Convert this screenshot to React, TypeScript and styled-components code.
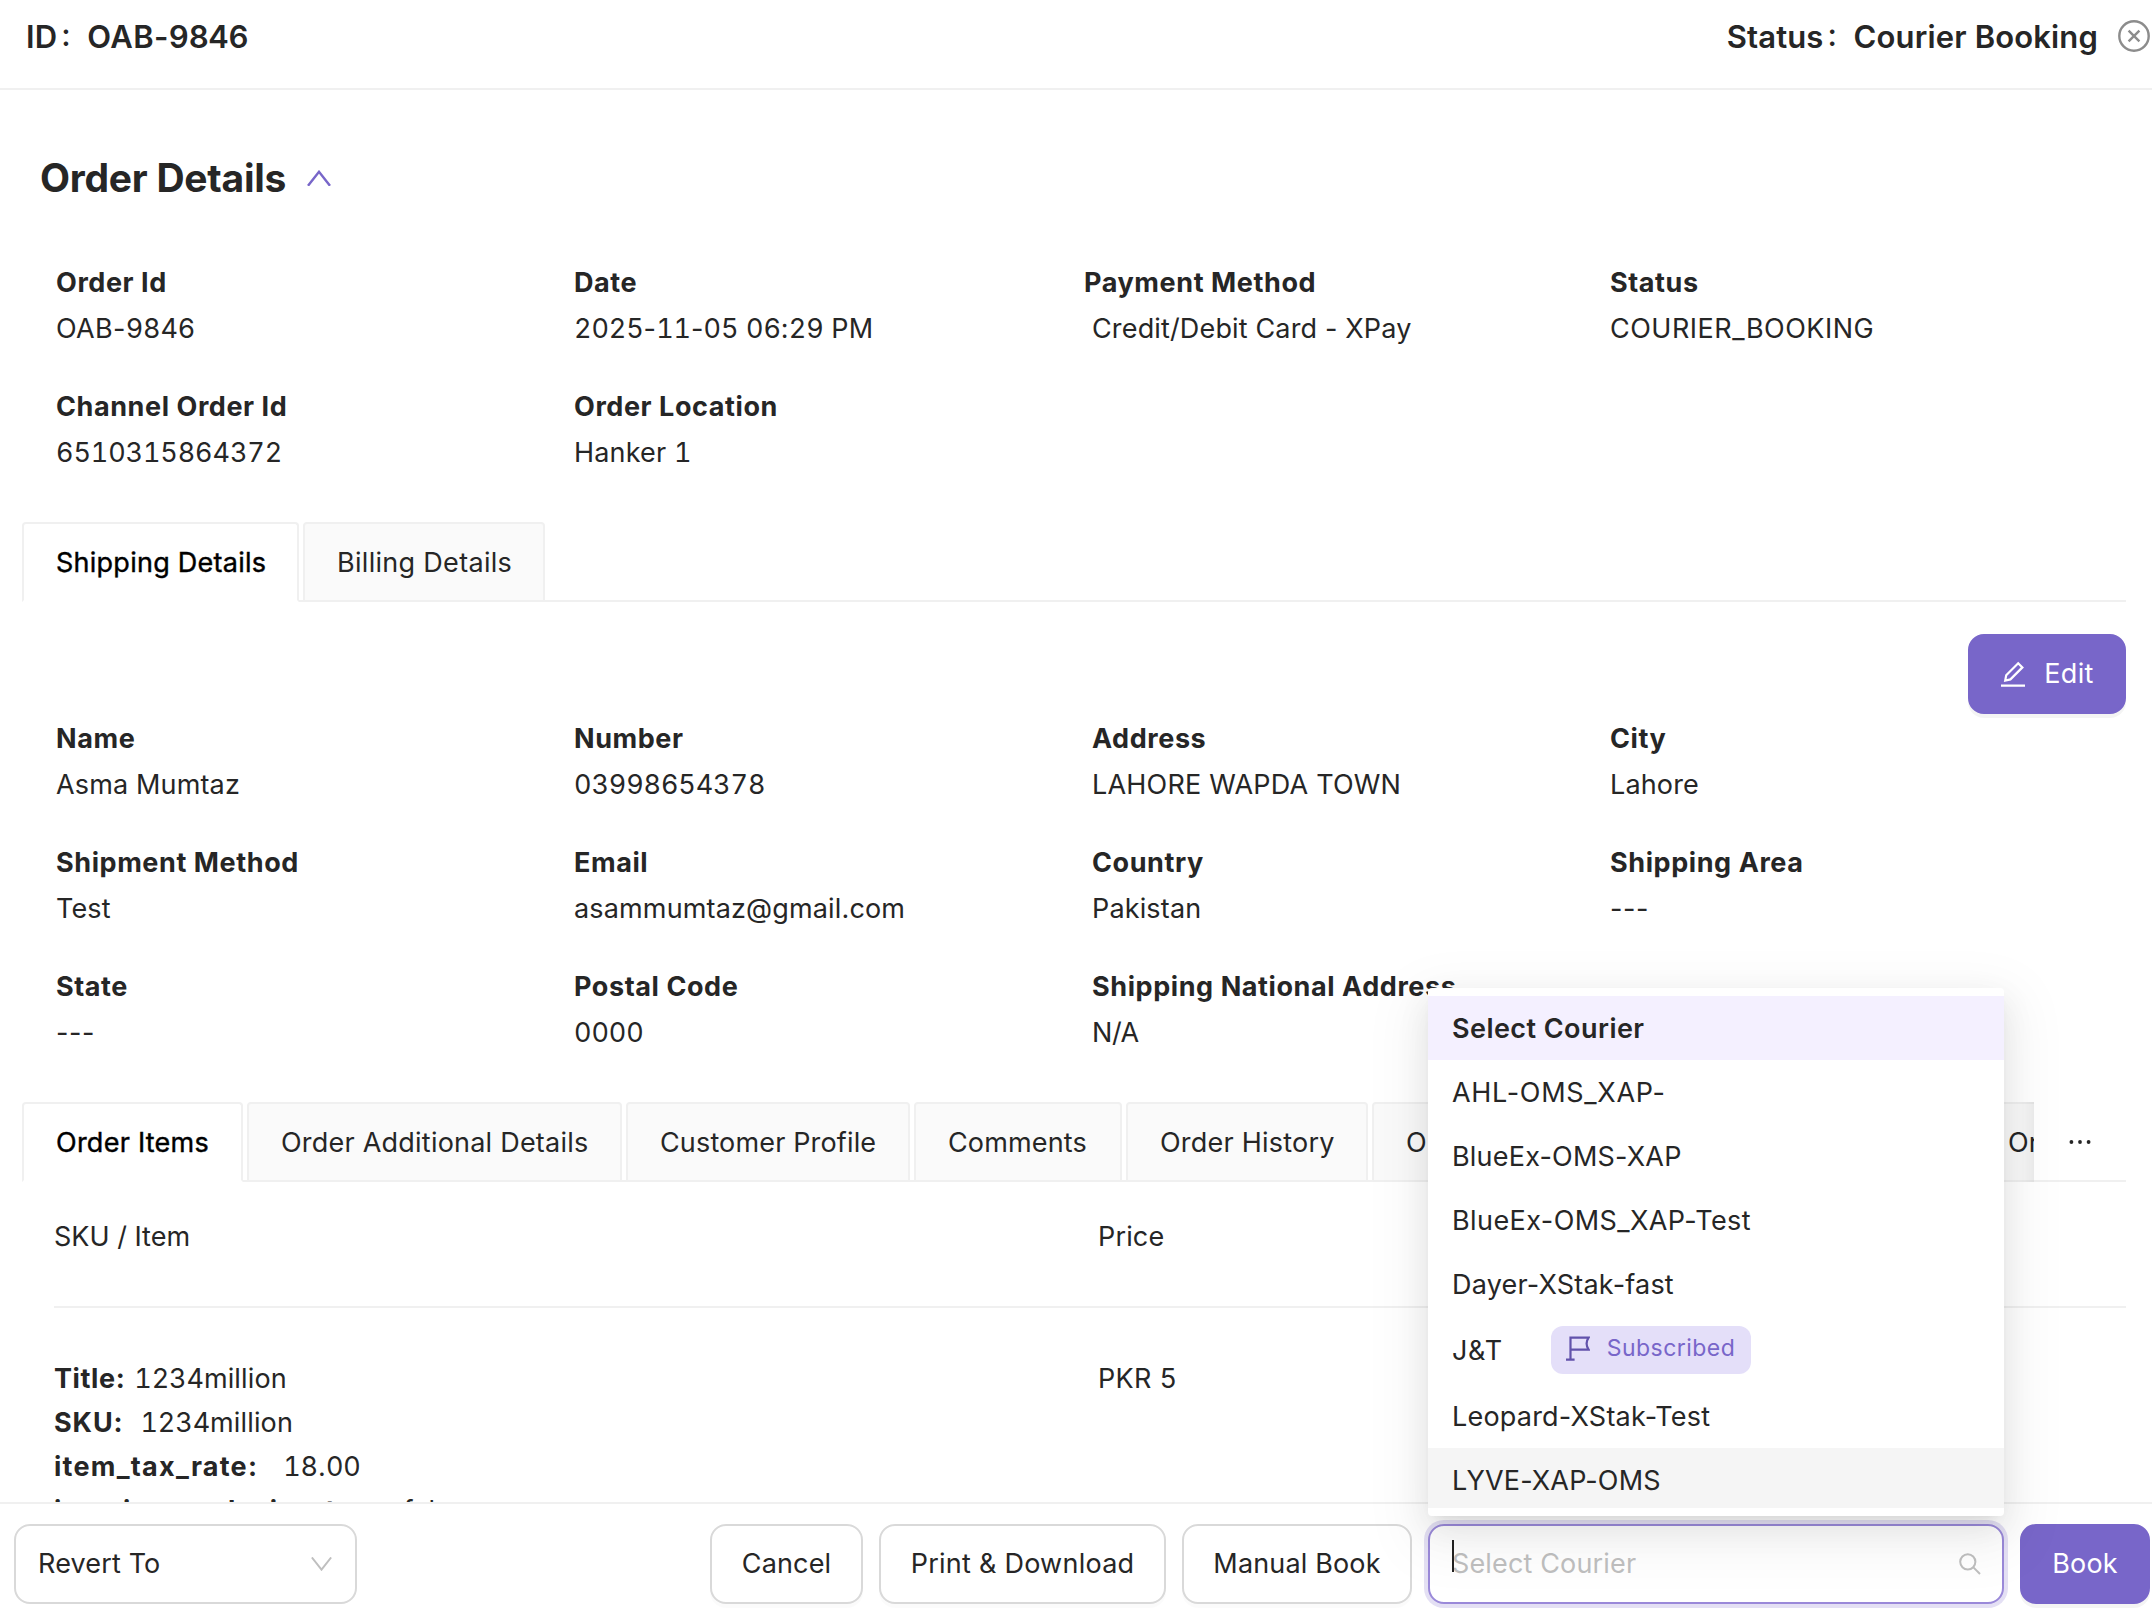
import React from "react";
import styled, { createGlobalStyle } from "styled-components";

const Global = createGlobalStyle`
  *{box-sizing:border-box}
  body{margin:0;background:#fff;overflow:hidden}
`;

const purple = "#7866c9";
const ink = "#262626";

const Page = styled.div`
  position: relative;
  display: flex;
  flex-direction: column;
  width: 2152px;
  height: 1614px;
  overflow: hidden;
  background: #fff;
  color: ${ink};
  font-family: Inter, "Liberation Sans", sans-serif;
  font-size: 27px;
  line-height: 44px;
  white-space: nowrap;
`;

const Spaced = styled.span<{ $ls: number }>`
  letter-spacing: ${(p) => p.$ls}px;
  white-space: pre;
`;

const Digits = styled.span`
  font-variant-numeric: tabular-nums;
  letter-spacing: -0.12px;
`;

// Digits share one advance width; hyphens and letters keep their own.
const Txt = ({ children, $ls = 0.15 }: { children: string; $ls?: number }) => (
  <Spaced $ls={$ls}>
    {children.split(/(\d+)/).map((part, i) => (i % 2 ? <Digits key={i}>{part}</Digits> : part))}
  </Spaced>
);

const Header = styled.header`
  display: flex;
  justify-content: space-between;
  flex: none;
  height: 90px;
  padding: 14px 2px 0 26px;
  border-bottom: 2px solid #f0f0f0;
  font-size: 31px;
  font-weight: 600;
`;

const HeaderPair = styled.div`
  display: flex;
  height: 46px;
  line-height: 46px;
`;

const Colon = styled.span`
  width: 30px;
  padding-left: 4px;
  margin-top: -2px;
  font-weight: 500;
`;

const CloseIcon = styled.svg`
  margin: 6px 0 0 20px;
`;

const Body = styled.main`
  display: flex;
  flex-direction: column;
  flex: none;
  height: 1412px;
  overflow: hidden;
  padding: 0 26px 0 22px;
`;

const TitleRow = styled.div`
  display: flex;
  align-items: center;
  flex: none;
  height: 60px;
  margin-top: 58px;
  padding-left: 18px;
  gap: 21px;
  font-size: 39px;
  font-weight: 700;
`;

const Grid = styled.div<{ $top: number }>`
  display: grid;
  flex: none;
  grid-template-columns: repeat(4, 518px);
  grid-auto-rows: 124px;
  margin-top: ${(p) => p.$top}px;
  padding-left: 34px;
`;

const Field = styled.div`
  display: flex;
  flex-direction: column;
  gap: 2px;
`;

const Label = styled.b<{ $shift?: number }>`
  font-weight: 700;
  margin-left: ${(p) => p.$shift ?? 0}px;
`;

const Tabs = styled.div<{ $top: number }>`
  display: flex;
  flex: none;
  gap: 4px;
  height: 80px;
  margin-top: ${(p) => p.$top}px;
  box-shadow: inset 0 -2px 0 #f0f0f0;
`;

const TabStrip = styled.div`
  position: relative;
  display: flex;
  gap: 4px;
  width: 2012px;
  overflow: hidden;
  &::after {
    content: "";
    position: absolute;
    top: 0;
    right: 0;
    width: 60px;
    height: 100%;
    box-shadow: inset -20px 0 16px -16px rgba(0, 0, 0, 0.08);
  }
`;

const Tab = styled.div<{ $w: number; $active?: boolean }>`
  flex: none;
  width: ${(p) => p.$w}px;
  height: 80px;
  padding: 17px 0 0 32px;
  border: 2px solid #f0f0f0;
  border-bottom-color: ${(p) => (p.$active ? "#fff" : "#f0f0f0")};
  border-radius: 4px 4px 0 0;
  background: ${(p) => (p.$active ? "#fff" : "#fafafa")};
  color: ${(p) => (p.$active ? "#000" : ink)};
  -webkit-text-stroke: ${(p) => (p.$active ? "0.4px #000" : "0")};
`;

const More = styled.div`
  display: flex;
  align-items: center;
  justify-content: center;
  width: 84px;
`;

const EditRow = styled.div`
  display: flex;
  justify-content: flex-end;
  flex: none;
  height: 80px;
  margin-top: 32px;
`;

const Button = styled.button<{ $w: number; $primary?: boolean; $ml?: number }>`
  display: flex;
  align-items: center;
  justify-content: center;
  gap: 18px;
  flex: none;
  width: ${(p) => p.$w}px;
  height: 80px;
  margin: 0 0 0 ${(p) => p.$ml ?? 0}px;
  padding: 0;
  border: 2px solid ${(p) => (p.$primary ? purple : "#d9d9d9")};
  border-radius: 16px;
  background: ${(p) => (p.$primary ? purple : "#fff")};
  color: ${(p) => (p.$primary ? "#fff" : ink)};
  font: inherit;
  box-shadow: 0 4px 0 rgba(0, 0, 0, ${(p) => (p.$primary ? 0.045 : 0.016)});
`;

const ItemHead = styled.div`
  display: grid;
  grid-template-columns: 1044px 1fr;
  flex: none;
  height: 126px;
  margin-left: 32px;
  padding-top: 33px;
  border-bottom: 2px solid #f0f0f0;
`;

const ItemRow = styled.div`
  display: grid;
  grid-template-columns: 1044px 1fr;
  flex: none;
  margin-left: 32px;
  padding-top: 49px;
`;

const ItemLine = styled.div<{ $gap: number }>`
  display: flex;
  gap: ${(p) => p.$gap}px;
  height: 44px;
  b {
    font-weight: 700;
  }
`;

const Footer = styled.footer`
  display: flex;
  flex: none;
  height: 112px;
  padding: 20px 2px 0 14px;
  border-top: 2px solid #f0f0f0;
`;

const RevertSelect = styled.div`
  display: flex;
  align-items: center;
  justify-content: space-between;
  width: 343px;
  height: 80px;
  margin-right: auto;
  padding: 0 23px 0 22px;
  border: 2px solid #d9d9d9;
  border-radius: 16px;
  background: #fff;
`;

const CourierSelect = styled.div`
  display: flex;
  align-items: center;
  justify-content: space-between;
  position: relative;
  width: 576px;
  height: 80px;
  margin: 0 16px;
  padding: 0 21px 0 22px;
  border: 2px solid #9a89d9;
  border-radius: 16px;
  background: #fff;
  color: #bfbfbf;
  box-shadow: 0 0 0 4px rgba(120, 102, 201, 0.2);
`;

const Caret = styled.i`
  position: absolute;
  left: 22px;
  top: 14px;
  width: 2px;
  height: 32px;
  background: #222;
`;

const Menu = styled.div`
  position: absolute;
  left: 1428px;
  top: 988px;
  width: 576px;
  height: 528px;
  padding: 8px 0;
  border-radius: 4px;
  background: #fff;
  box-shadow: 0 6px 12px -8px rgba(0, 0, 0, 0.12), 0 12px 32px 0 rgba(0, 0, 0, 0.08),
    0 18px 56px 16px rgba(0, 0, 0, 0.05);
`;

const MenuList = styled.div`
  height: 512px;
  overflow: hidden;
`;

const Option = styled.div<{ $bg?: string; $bold?: boolean; $tall?: boolean }>`
  display: flex;
  align-items: center;
  height: ${(p) => (p.$tall ? 68 : 64)}px;
  padding: 1px 24px 0;
  background: ${(p) => p.$bg ?? "transparent"};
  font-weight: ${(p) => (p.$bold ? 600 : 400)};
`;

const Badge = styled.span`
  display: flex;
  align-items: center;
  gap: 17px;
  width: 200px;
  height: 48px;
  margin: 0 0 1px 48px;
  padding: 0 0 4px 15px;
  border-radius: 12px;
  background: #e4dff9;
  color: ${purple};
  font-size: 23px;
`;

type Row = readonly [label: string, value: string, valueSpacing?: number];

const details: Row[] = [
  ["Order Id", "OAB-9846", 0.3],
  ["Date", "2025-11-05 06:29 PM"],
  ["Payment Method", "Credit/Debit Card - XPay"],
  ["Status", "COURIER_BOOKING", 0.5],
  ["Channel Order Id", "6510315864372"],
  ["Order Location", "Hanker 1"],
];

const shipping: Row[] = [
  ["Name", "Asma Mumtaz"],
  ["Number", "03998654378"],
  ["Address", "LAHORE WAPDA TOWN", 0.2],
  ["City", "Lahore"],
  ["Shipment Method", "Test"],
  ["Email", "asammumtaz@gmail.com"],
  ["Country", "Pakistan"],
  ["Shipping Area", "---", 0.6],
  ["State", "---", 0.6],
  ["Postal Code", "0000"],
  ["Shipping National Address", "N/A", -0.4],
];

const Fields = ({ rows, top }: { rows: Row[]; top: number }) => (
  <Grid $top={top}>
    {rows.map(([label, value, ls]) => (
      <Field key={label}>
        <Label $shift={label === "Payment Method" ? -8 : 0}>
          <Txt $ls={0.58}>{label}</Txt>
        </Label>
        <Txt $ls={ls}>{value}</Txt>
      </Field>
    ))}
  </Grid>
);

const Chevron = ({ up, color, w, sw }: { up?: boolean; color: string; w: number; sw: number }) => (
  <svg width={w} height={w * 0.68} viewBox="0 0 24 16.3" fill="none" stroke={color} strokeWidth={sw}>
    <path d={up ? "M1 15.8 L12 1.8 L23 15.8" : "M1 .5 L12 14.5 L23 .5"} />
  </svg>
);

export default function App() {
  return (
    <Page>
      <Global />
      <Header>
        <HeaderPair>
          <Txt>ID</Txt>
          <Colon>:</Colon>
          <Txt $ls={0.35}>OAB-9846</Txt>
        </HeaderPair>
        <HeaderPair>
          <Txt>Status</Txt>
          <Colon>:</Colon>
          <Txt>Courier Booking</Txt>
          <CloseIcon width="32" height="32" viewBox="0 0 32 32" fill="none" stroke="#8c8c8c" strokeWidth="2.4">
            <circle cx="16" cy="16" r="14.7" />
            <path d="M10.6 10.6 L21.4 21.4 M21.4 10.6 L10.6 21.4" />
          </CloseIcon>
        </HeaderPair>
      </Header>
      <Body>
        <TitleRow>
          <Txt $ls={-0.25}>Order Details</Txt>
          <Chevron up color={purple} w={24} sw={2.4} />
        </TitleRow>
        <Fields rows={details} top={53} />
        <Tabs $top={13}>
          <Tab $w={277} $active>
            <Txt $ls={0.25}>Shipping Details</Txt>
          </Tab>
          <Tab $w={242}>
            <Txt $ls={0.3}>Billing Details</Txt>
          </Tab>
        </Tabs>
        <EditRow>
          <Button $w={158} $primary>
            <svg width="26" height="26" viewBox="0 0 26 26" fill="none" stroke="#fff" strokeWidth="2.2">
              <path d="M1 24.6 H25 M5.2 19.6 L6.2 14.2 L18.2 2.2 L22.4 6.4 L10.4 18.4 Z" />
            </svg>
            <Txt $ls={0.3}>Edit</Txt>
          </Button>
        </EditRow>
        <Fields rows={shipping} top={3} />
        <Tabs $top={13}>
          <TabStrip>
            <Tab $w={221} $active>
              <Txt $ls={0.25}>Order Items</Txt>
            </Tab>
            <Tab $w={375}>
              <Txt $ls={0.22}>Order Additional Details</Txt>
            </Tab>
            <Tab $w={284}>
              <Txt>Customer Profile</Txt>
            </Tab>
            <Tab $w={208}>
              <Txt>Comments</Txt>
            </Tab>
            <Tab $w={242}>
              <Txt $ls={0.22}>Order History</Txt>
            </Tab>
            <Tab $w={598}>
              <Txt>O</Txt>
            </Tab>
            <Tab $w={260}>
              <Txt>Order</Txt>
            </Tab>
          </TabStrip>
          <More>
            <svg width="24" height="6" viewBox="0 0 24 6" fill={ink}>
              <circle cx="3.4" cy="3" r="1.9" />
              <circle cx="12" cy="3" r="1.9" />
              <circle cx="20.6" cy="3" r="1.9" />
            </svg>
          </More>
        </Tabs>
        <ItemHead>
          <Txt $ls={0}>SKU / Item</Txt>
          <Txt>Price</Txt>
        </ItemHead>
        <ItemRow>
          <div>
            <ItemLine $gap={9}>
              <b>
                <Txt $ls={0.6}>Title:</Txt>
              </b>
              <Txt>1234million</Txt>
            </ItemLine>
            <ItemLine $gap={17}>
              <b>
                <Txt $ls={0.9}>SKU:</Txt>
              </b>
              <Txt>1234million</Txt>
            </ItemLine>
            <ItemLine $gap={25}>
              <b>
                <Txt $ls={1.25}>item_tax_rate:</Txt>
              </b>
              <Txt>18.00</Txt>
            </ItemLine>
            <ItemLine $gap={24}>
              <b>
                <Txt $ls={0.9}>is_price_exclusive_tax:</Txt>
              </b>
              <Txt>false</Txt>
            </ItemLine>
          </div>
          <Txt $ls={0.3}>PKR 5</Txt>
        </ItemRow>
      </Body>
      <Footer>
        <RevertSelect>
          <Txt>Revert To</Txt>
          <Chevron color="#bfbfbf" w={21} sw={2.2} />
        </RevertSelect>
        <Button $w={153}>
          <Txt>Cancel</Txt>
        </Button>
        <Button $w={287} $ml={16}>
          <Txt $ls={0.25}>Print &amp; Download</Txt>
        </Button>
        <Button $w={230} $ml={16}>
          <Txt>Manual Book</Txt>
        </Button>
        <CourierSelect>
          <Caret />
          <Txt>Select Courier</Txt>
          <svg width="22" height="22" viewBox="0 0 22 22" fill="none" stroke="#bfbfbf" strokeWidth="2">
            <circle cx="8.8" cy="8.8" r="7.6" />
            <path d="M14.4 14.4 L21 21" />
          </svg>
        </CourierSelect>
        <Button $w={130} $primary>
          <Txt>Book</Txt>
        </Button>
      </Footer>
      <Menu>
        <MenuList>
          <Option $bg="#f4f0ff" $bold>
            <Txt $ls={0.45}>Select Courier</Txt>
          </Option>
          <Option>
            <Txt $ls={0.7}>AHL-OMS_XAP-</Txt>
          </Option>
          <Option>
            <Txt $ls={0.2}>BlueEx-OMS-XAP</Txt>
          </Option>
          <Option>
            <Txt $ls={0.42}>BlueEx-OMS_XAP-Test</Txt>
          </Option>
          <Option>
            <Txt $ls={0.2}>Dayer-XStak-fast</Txt>
          </Option>
          <Option $tall>
            <Txt $ls={0.7}>J&amp;T</Txt>
            <Badge>
              <svg width="24" height="25" viewBox="0 0 24 25" fill="none" stroke="#6152ab" strokeWidth="2.2">
                <path d="M4.5 23.5 V1.7 H22.6 Q18.6 7.6 22.6 13.6 H4.5 M0 23.6 H8.6" />
              </svg>
              <Txt $ls={0.45}>Subscribed</Txt>
            </Badge>
          </Option>
          <Option>
            <Txt $ls={0.2}>Leopard-XStak-Test</Txt>
          </Option>
          <Option $bg="#f5f5f5">
            <Txt $ls={0.15}>LYVE-XAP-OMS</Txt>
          </Option>
        </MenuList>
      </Menu>
    </Page>
  );
}
